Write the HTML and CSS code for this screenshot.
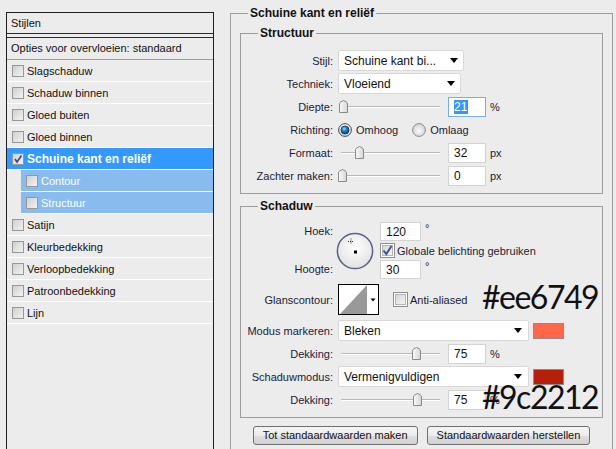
FILE: index.html
```html
<!DOCTYPE html>
<html>
<head>
<meta charset="utf-8">
<title>Laagstijl</title>
<link rel="stylesheet" href="styles.css">
</head>
<body>
<div class="page">
  <div class="styles-panel">
    <div class="panel-head">Stijlen</div>
    <div class="blend-row">Opties voor overvloeien: standaard</div>
    <div class="row"><span class="cb"></span>Slagschaduw</div>
    <div class="row"><span class="cb"></span>Schaduw binnen</div>
    <div class="row"><span class="cb"></span>Gloed buiten</div>
    <div class="row"><span class="cb"></span>Gloed binnen</div>
    <div class="row sel"><span class="cb"><svg width="10" height="10" viewBox="0 0 10 10"><path d="M2 5 L4 8 L8.5 1.5" fill="none" stroke="#3b4a78" stroke-width="1.6"/></svg></span>Schuine kant en reliëf</div>
    <div class="row sub"><span class="cb"></span>Contour</div>
    <div class="row sub"><span class="cb"></span>Structuur</div>
    <div class="row"><span class="cb"></span>Satijn</div>
    <div class="row"><span class="cb"></span>Kleurbedekking</div>
    <div class="row"><span class="cb"></span>Verloopbedekking</div>
    <div class="row"><span class="cb"></span>Patroonbedekking</div>
    <div class="row"><span class="cb"></span>Lijn</div>
  </div>

  <div class="main">
    <fieldset class="outer">
      <legend>Schuine kant en reliëf</legend>

      <fieldset class="group structure">
        <legend>Structuur</legend>
        <div class="form">
          <span class="lbl">Stijl:</span>
          <div class="ctrl"><div class="select w-style"><span>Schuine kant bi...</span><span class="arrow"></span></div></div>

          <span class="lbl">Techniek:</span>
          <div class="ctrl"><div class="select w-tech"><span>Vloeiend</span><span class="arrow"></span></div></div>

          <span class="lbl">Diepte:</span>
          <div class="ctrl">
            <div class="slider"><svg class="thumb" style="margin-left:1px" width="9" height="13" viewBox="0 0 9 13"><defs><linearGradient id="tg1" x1="0" y1="0" x2="1" y2="0"><stop offset="0" stop-color="#fafafa"/><stop offset="1" stop-color="#d6d6d6"/></linearGradient></defs><path d="M0.5 12.5 V4 Q0.5 2.6 2 1.7 L4.5 0.5 L7 1.7 Q8.5 2.6 8.5 4 V12.5 Z" fill="url(#tg1)" stroke="#8a8a8a"/></svg></div>
            <div class="num focus"><span class="hl">21</span><span class="caret"></span></div><span class="unit">%</span>
          </div>

          <span class="lbl">Richting:</span>
          <div class="ctrl radios">
            <svg class="radio" width="14" height="14" viewBox="0 0 14 14"><defs><radialGradient id="rb" cx="40%" cy="35%" r="65%"><stop offset="0" stop-color="#9ad8ff"/><stop offset="0.45" stop-color="#1d86cf"/><stop offset="1" stop-color="#0a3a68"/></radialGradient><linearGradient id="rr" x1="0" y1="0" x2="0" y2="1"><stop offset="0" stop-color="#f2f2f2"/><stop offset="1" stop-color="#cfcfcf"/></linearGradient></defs><circle cx="7" cy="7" r="6.4" fill="url(#rr)" stroke="#4c4c4c"/><circle cx="7" cy="7" r="4" fill="url(#rb)" stroke="#17375a" stroke-width="0.8"/></svg>
            <span>Omhoog</span>
            <svg class="radio off" width="14" height="14" viewBox="0 0 14 14"><defs><radialGradient id="ro" cx="50%" cy="55%" r="60%"><stop offset="0" stop-color="#fbfbfb"/><stop offset="1" stop-color="#cdcdcd"/></radialGradient></defs><circle cx="7" cy="7" r="6.4" fill="url(#ro)" stroke="#8a8a8a"/></svg>
            <span>Omlaag</span>
          </div>

          <span class="lbl">Formaat:</span>
          <div class="ctrl">
            <div class="slider"><svg class="thumb" style="margin-left:17px" width="9" height="13" viewBox="0 0 9 13"><path d="M0.5 12.5 V4 Q0.5 2.6 2 1.7 L4.5 0.5 L7 1.7 Q8.5 2.6 8.5 4 V12.5 Z" fill="url(#tg1)" stroke="#8a8a8a"/></svg></div>
            <div class="num">32</div><span class="unit">px</span>
          </div>

          <span class="lbl">Zachter maken:</span>
          <div class="ctrl">
            <div class="slider"><svg class="thumb" style="margin-left:0px" width="9" height="13" viewBox="0 0 9 13"><path d="M0.5 12.5 V4 Q0.5 2.6 2 1.7 L4.5 0.5 L7 1.7 Q8.5 2.6 8.5 4 V12.5 Z" fill="url(#tg1)" stroke="#8a8a8a"/></svg></div>
            <div class="num">0</div><span class="unit">px</span>
          </div>
        </div>
      </fieldset>

      <fieldset class="group shadow">
        <legend>Schaduw</legend>
        <div class="angle">
          <div class="angle-labels"><span>Hoek:</span><span>Hoogte:</span></div>
          <svg class="dial" width="38" height="38" viewBox="0 0 38 38"><defs><radialGradient id="dg" cx="50%" cy="40%" r="60%"><stop offset="0" stop-color="#ffffff"/><stop offset="1" stop-color="#e2e2e2"/></radialGradient></defs><circle cx="19" cy="19" r="17.6" fill="url(#dg)" stroke="#55638a" stroke-width="1.5"/><path d="M15 6.5 V12.5 M12 9.5 H18" stroke="#333" stroke-width="1" stroke-dasharray="1 1"/><rect x="18" y="18.5" width="3" height="3" fill="#000"/></svg>
          <div class="angle-fields">
            <div class="fld"><div class="num short">120</div><span class="deg">°</span></div>
            <div class="fld chk"><svg class="cb2" width="15" height="15" viewBox="0 0 15 15"><defs><linearGradient id="cg" x1="0" y1="0" x2="1" y2="1"><stop offset="0" stop-color="#d4d4d4"/><stop offset="1" stop-color="#f7f7f7"/></linearGradient></defs><rect x="0.5" y="0.5" width="14" height="14" fill="#fff" stroke="#8e8f8f"/><rect x="2.5" y="2.5" width="10" height="10" fill="url(#cg)" stroke="#b5b5b5"/><path d="M3.5 7.5 L6.3 11 L11.5 3" fill="none" stroke="#3c5396" stroke-width="2"/></svg><span>Globale belichting gebruiken</span></div>
            <div class="fld"><div class="num short">30</div><span class="deg">°</span></div>
          </div>
        </div>

        <div class="form gloss">
          <span class="lbl">Glanscontour:</span>
          <div class="ctrl">
            <svg class="contour" width="41" height="31" viewBox="0 0 41 31"><rect x="0.5" y="0.5" width="40" height="30" fill="#fff" stroke="#000"/><polygon points="2,30 29,1 29,30" fill="#999"/><polygon points="32.5,14.5 37.5,14.5 35,17.5" fill="#000"/></svg>
            <svg class="cb2 aa" width="15" height="15" viewBox="0 0 15 15"><rect x="0.5" y="0.5" width="14" height="14" fill="#fff" stroke="#8e8f8f"/><rect x="2.5" y="2.5" width="10" height="10" fill="url(#cg)" stroke="#b5b5b5"/></svg>
            <span class="aa-text">Anti-aliased</span>
          </div>
        </div>

        <div class="form modes">
          <span class="lbl">Modus markeren:</span>
          <div class="ctrl"><div class="select w-mode"><span>Bleken</span><span class="arrow"></span></div><span class="swatch light"></span></div>

          <span class="lbl">Dekking:</span>
          <div class="ctrl">
            <div class="slider"><svg class="thumb" style="margin-left:74px" width="9" height="13" viewBox="0 0 9 13"><path d="M0.5 12.5 V4 Q0.5 2.6 2 1.7 L4.5 0.5 L7 1.7 Q8.5 2.6 8.5 4 V12.5 Z" fill="url(#tg1)" stroke="#8a8a8a"/></svg></div>
            <div class="num">75</div><span class="unit">%</span>
          </div>

          <span class="lbl">Schaduwmodus:</span>
          <div class="ctrl"><div class="select w-mode"><span>Vermenigvuldigen</span><span class="arrow"></span></div><span class="swatch dark"></span></div>

          <span class="lbl">Dekking:</span>
          <div class="ctrl">
            <div class="slider"><svg class="thumb" style="margin-left:75px" width="9" height="13" viewBox="0 0 9 13"><path d="M0.5 12.5 V4 Q0.5 2.6 2 1.7 L4.5 0.5 L7 1.7 Q8.5 2.6 8.5 4 V12.5 Z" fill="url(#tg1)" stroke="#8a8a8a"/></svg></div>
            <div class="num">75</div><span class="unit">%</span>
          </div>
        </div>
      </fieldset>

      <div class="buttons">
        <button class="btn" type="button">Tot standaardwaarden maken</button>
        <button class="btn" type="button">Standaardwaarden herstellen</button>
      </div>
    </fieldset>
  </div>

  <div class="hex hex-light">#ee6749</div>
  <div class="hex hex-dark">#9c2212</div>
</div>
</body>
</html>
```

FILE: styles.css
```css
* { box-sizing: border-box; }
html, body { margin: 0; padding: 0; }
body {
  background: #ececec;
  font-family: "Liberation Sans", Arial, sans-serif;
  font-size: 11px;
  color: #111;
  width: 616px;
  height: 449px;
  overflow: hidden;
}
.page {
  position: relative;
  display: flex;
  align-items: flex-start;
  height: 449px;
  overflow: hidden;
}

/* ---------- left styles list ---------- */
.styles-panel {
  margin: 12px 0 0 6px;
  width: 208px;
  height: 437px;
  flex: none;
  border: 1px solid #1e1e1e;
  border-bottom: 0;
  display: flex;
  flex-direction: column;
}
.panel-head {
  height: 21px;
  line-height: 20px;
  padding-left: 4px;
  border-bottom: 1px solid #2a2a2a;
}
.blend-row {
  margin-top: 3px;
  height: 23px;
  line-height: 21px;
  padding-left: 4px;
  border-top: 1px solid #2a2a2a;
  border-bottom: 1px solid #9a9a9a;
}
.row {
  height: 22px;
  display: flex;
  align-items: center;
  gap: 3px;
  padding-left: 5px;
  border-bottom: 1px solid #ffffff;
}
.row.sel {
  background: #3399ff;
  color: #fff;
  font-weight: bold;
  font-size: 12px;
}
.row.sub {
  margin-left: 14px;
  background: #89bbef;
  color: #fff;
}
.cb {
  width: 12px;
  height: 12px;
  flex: none;
  border: 1px solid #979797;
  background: linear-gradient(135deg, #cfcfcf, #f3f3f3);
  display: flex;
  align-items: center;
  justify-content: center;
}

/* ---------- right dialog ---------- */
.main { margin-left: 16px; flex: none; }
fieldset {
  margin: 0;
  padding: 0;
  min-width: 0;
  border: 1px solid #9c9c9c;
}
legend {
  font-weight: bold;
  font-size: 12px;
  line-height: 14px;
  padding: 0 2px;
  margin-left: 8px;
  color: #111;
}
.outer {
  margin-top: 6px;
  width: 383px;
  height: 443px;
  padding: 6px 9px 0;
  border-bottom: 0;
}
.group {
  width: 363px;
  padding: 9px 0 6px;
}
.group legend { margin-left: 17px; }
.shadow { margin-top: 5px; }

.form {
  display: grid;
  grid-template-columns: 92px auto;
  column-gap: 5px;
  grid-auto-rows: 23px;
  align-items: center;
}
.lbl {
  text-align: right;
  color: #1b1b36;
  white-space: nowrap;
}
.ctrl {
  display: flex;
  align-items: center;
  color: #1b1b36;
}

.select {
  height: 21px;
  background: #fff;
  border: 1px solid #d8d8d8;
  border-radius: 2px;
  font-size: 12px;
  color: #111;
  padding: 0 5px 0 5px;
  display: flex;
  align-items: center;
  justify-content: space-between;
  white-space: nowrap;
}
.w-style { width: 126px; }
.w-tech { width: 123px; }
.w-mode { width: 191px; padding-right: 6px; }
.arrow {
  width: 0;
  height: 0;
  border-left: 4.5px solid transparent;
  border-right: 4.5px solid transparent;
  border-top: 5px solid #000;
}

.slider {
  width: 102px;
  height: 13px;
  margin-right: 8px;
  display: flex;
  align-items: flex-start;
  background:
    linear-gradient(#b9b9b9, #b9b9b9) 3px 6px / 99px 1px no-repeat,
    linear-gradient(#ffffff, #ffffff) 3px 7px / 99px 1px no-repeat;
}
.thumb { display: block; flex: none; }

.num {
  width: 38px;
  height: 20px;
  background: #fff;
  border: 1px solid #d3d3d3;
  font-size: 12px;
  line-height: 18px;
  padding-left: 5px;
  color: #111;
  display: flex;
  align-items: center;
}
.num.short { width: 41px; height: 19px; }
.num.focus { border-color: #7aaee2; }
.hl { background: #3399ff; color: #fff; line-height: 14px; }
.caret { width: 1px; height: 14px; background: #d9670f; }
.unit { margin-left: 4px; }
.deg { margin-left: 4px; align-self: flex-start; line-height: 12px; }

.radios .radio { flex: none; }
.radios span { margin-left: 4px; }
.radios .radio.off { margin-left: 14px; }

/* angle block */
.angle {
  display: flex;
  align-items: center;
  height: 57px;
}
.angle-labels {
  width: 92px;
  height: 57px;
  display: flex;
  flex-direction: column;
  justify-content: space-between;
  text-align: right;
  line-height: 19px;
  color: #1b1b36;
}
.dial { margin-left: 3px; flex: none; }
.angle-fields {
  margin-left: 6px;
  height: 57px;
  display: flex;
  flex-direction: column;
  justify-content: space-between;
}
.fld { display: flex; align-items: center; color: #1b1b36; }
.fld.chk span { margin-left: 2px; }
.cb2 { flex: none; display: block; }

.gloss { grid-auto-rows: 31px; margin-top: 5px; }
.contour { display: block; flex: none; }
.cb2.aa { margin-left: 14px; }
.aa-text { margin-left: 2px; }

.modes { margin-top: 4px; }
.swatch {
  width: 31px;
  height: 16px;
  margin-left: 4px;
  border: 1px solid #8c8c8c;
}
.swatch.light { background: #ff6748; }
.swatch.dark { background: #b61f0c; }

.buttons {
  margin-top: 8px;
  display: flex;
  justify-content: center;
  gap: 9px;
}
.btn {
  height: 19px;
  padding: 0 9px;
  margin: 0;
  border: 1px solid #707070;
  border-radius: 3px;
  background: linear-gradient(#f4f4f4 0%, #ececec 50%, #dedede 51%, #d2d2d2 100%);
  font-family: "Liberation Sans", Arial, sans-serif;
  font-size: 11px;
  line-height: 17px;
  color: #111;
}

/* annotations over the dialog */
.hex {
  position: absolute;
  left: 482px;
  font-family: Lato, "DejaVu Sans", sans-serif;
  font-size: 32px;
  line-height: 32px;
  letter-spacing: -1.5px;
  color: #111;
  white-space: nowrap;
}
.hex-light { top: 281px; }
.hex-dark { top: 381px; }
```
